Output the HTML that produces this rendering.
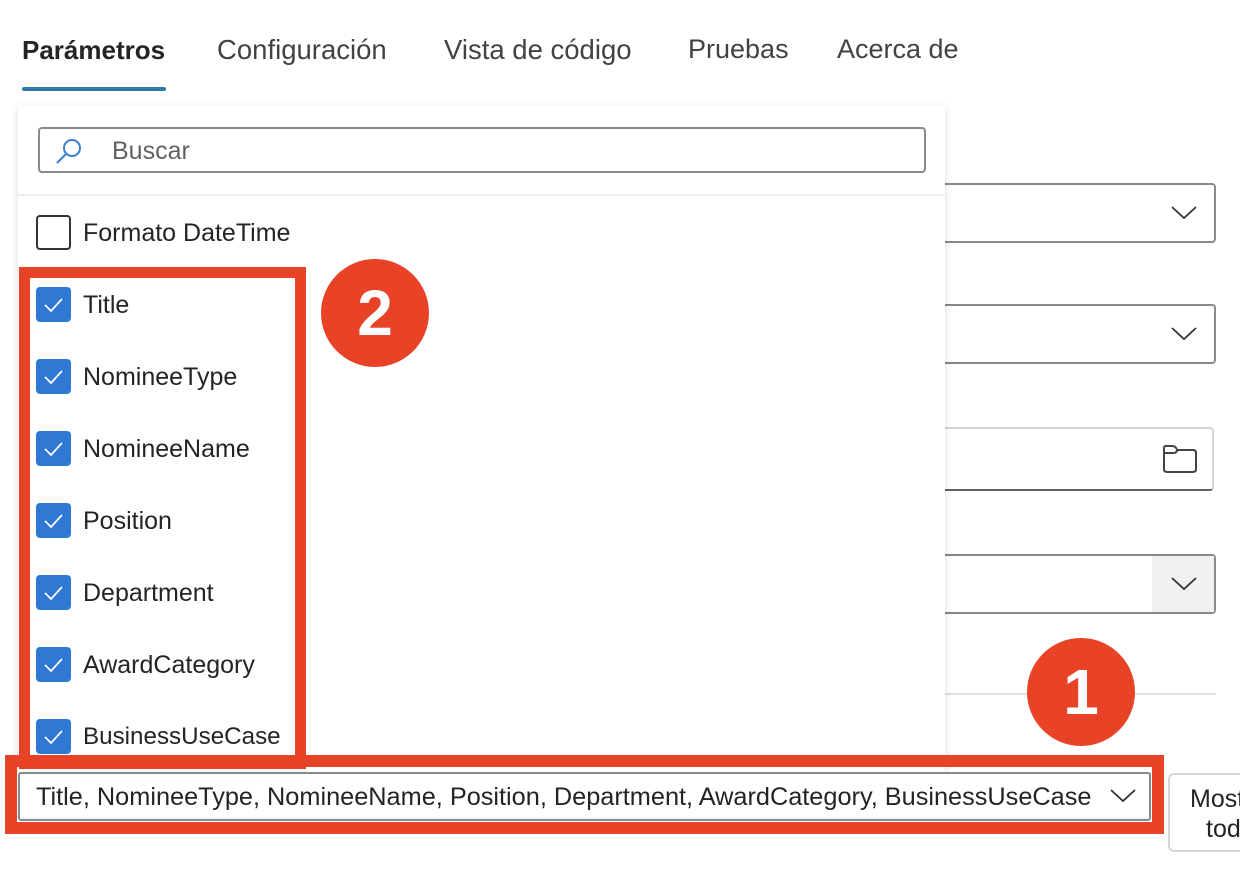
<!DOCTYPE html>
<html><head><meta charset="utf-8"><style>
*{box-sizing:border-box;margin:0;padding:0}
body{width:1240px;height:880px;background:#fff;position:relative;overflow:hidden;font-family:"Liberation Sans",sans-serif;color:#242424}
.a{position:absolute}
.tab{position:absolute;top:34px;font-size:27.5px;color:#424242}
.box{position:absolute;border:2px solid #8a8a8a;border-radius:4px;background:#fff}
.cb{position:absolute;left:36px;width:35px;height:35px;border-radius:4px;background:#3078d4}
.lbl{position:absolute;left:83px;font-size:25px;color:#242424}
.circ{position:absolute;width:108px;height:108px;border-radius:50%;background:#e84227;color:#fff;font-weight:bold;font-size:64px;text-align:center;line-height:108px}
</style></head><body>
<div class="tab" style="left:22px;font-weight:bold;color:#242424;font-size:26px;top:35px">Parámetros</div>
<div class="a" style="left:22px;top:87px;width:144px;height:4px;background:#2f78a8;border-radius:2px"></div>
<div class="tab" style="left:217px">Configuración</div>
<div class="tab" style="left:444px">Vista de código</div>
<div class="tab" style="left:688px;font-size:27px">Pruebas</div>
<div class="tab" style="left:837px;font-size:27px">Acerca de</div>

<div class="box" style="left:900px;top:183px;width:316px;height:60px"></div>
<svg class="a" style="left:1170px;top:205px" width="28" height="16"><path d="M2 2 L14 13 L26 2" fill="none" stroke="#333" stroke-width="1.8"/></svg>
<div class="box" style="left:900px;top:304px;width:316px;height:60px"></div>
<svg class="a" style="left:1170px;top:326px" width="28" height="16"><path d="M2 2 L14 13 L26 2" fill="none" stroke="#333" stroke-width="1.8"/></svg>
<div class="box" style="left:900px;top:427px;width:314px;height:64px;border-color:#d6d6d6;border-bottom-color:#616161"></div>
<svg class="a" style="left:1161px;top:443px" width="38" height="32"><path d="M3 5 Q3 3 5 3 H11 Q15 3 16 7 H32 Q35 7 35 10 V26 Q35 29 32 29 H6 Q3 29 3 26 Z M3 10 H12 Q16 10 16 7" fill="none" stroke="#444" stroke-width="2"/></svg>
<div class="box" style="left:900px;top:554px;width:316px;height:60px"></div>
<div class="a" style="left:1152px;top:556px;width:62px;height:56px;background:#f1f1f0"></div>
<svg class="a" style="left:1170px;top:576px" width="28" height="16"><path d="M2 2 L14 13 L26 2" fill="none" stroke="#333" stroke-width="1.8"/></svg>
<div class="a" style="left:900px;top:693px;width:316px;height:2px;background:#e0e0e0"></div>

<div class="a" style="left:18px;top:106px;width:927px;height:666px;background:#fff;box-shadow:0 2px 8px rgba(0,0,0,.14)"></div>
<div class="a" style="left:38px;top:127px;width:888px;height:46px;border:2px solid #8a8a8a;border-radius:4px"></div>
<svg class="a" style="left:54px;top:136px" width="30" height="30"><circle cx="18" cy="12" r="8" fill="none" stroke="#3b7fd4" stroke-width="2"/><path d="M12 18 L3 27" stroke="#3b7fd4" stroke-width="2"/></svg>
<div class="a" style="left:112px;top:137px;font-size:25px;color:#616161">Buscar</div>
<div class="a" style="left:18px;top:194px;width:927px;height:2px;background:#ededed"></div>
<div class="cb" style="top:215px;background:#fff;border:2px solid #333"></div>
<div class="lbl" style="top:219px">Formato DateTime</div>

<div class="cb" style="top:287px"></div><div class="lbl" style="top:291px">Title</div>
<div class="cb" style="top:359px"></div><div class="lbl" style="top:363px">NomineeType</div>
<div class="cb" style="top:431px"></div><div class="lbl" style="top:435px">NomineeName</div>
<div class="cb" style="top:503px"></div><div class="lbl" style="top:507px">Position</div>
<div class="cb" style="top:575px"></div><div class="lbl" style="top:579px">Department</div>
<div class="cb" style="top:647px"></div><div class="lbl" style="top:651px">AwardCategory</div>
<div class="cb" style="top:719px"></div><div class="lbl" style="top:723px;font-size:24.2px">BusinessUseCase</div>
<svg class="a" style="left:36px;top:0" width="35" height="760">
<g fill="none" stroke="#fff" stroke-width="1.8">
<path d="M9 305 L15 311 L26 299"/><path d="M9 377 L15 383 L26 371"/><path d="M9 449 L15 455 L26 443"/><path d="M9 521 L15 527 L26 515"/><path d="M9 593 L15 599 L26 587"/><path d="M9 665 L15 671 L26 659"/><path d="M9 737 L15 743 L26 731"/>
</g></svg>

<div class="a" style="left:19px;top:267px;width:287px;height:502px;border:11px solid #e84227"></div>
<div class="circ" style="left:321px;top:259px">2</div>

<div class="a" style="left:5px;top:755px;width:1159px;height:79px;border:12px solid #e84227"></div>
<div class="a" style="left:18px;top:772px;width:1133px;height:49px;border:2px solid #8a8a8a;border-radius:3px;background:#fff"></div>
<div class="a" style="left:36px;top:783px;font-size:25.3px;color:#242424;white-space:nowrap">Title, NomineeType, NomineeName, Position, Department, AwardCategory, BusinessUseCase</div>
<svg class="a" style="left:1109px;top:788px" width="28" height="16"><path d="M2 2 L14 13 L26 2" fill="none" stroke="#333" stroke-width="1.8"/></svg>
<div class="a" style="left:1168px;top:773px;width:90px;height:79px;border:2px solid #d6d6d6;border-radius:6px;background:#fff"></div>
<div class="a" style="left:1190px;top:785px;font-size:25px;color:#242424">Most</div>
<div class="a" style="left:1206px;top:815px;font-size:25px;color:#242424">tod</div>
<div class="circ" style="left:1027px;top:638px">1</div>
</body></html>
